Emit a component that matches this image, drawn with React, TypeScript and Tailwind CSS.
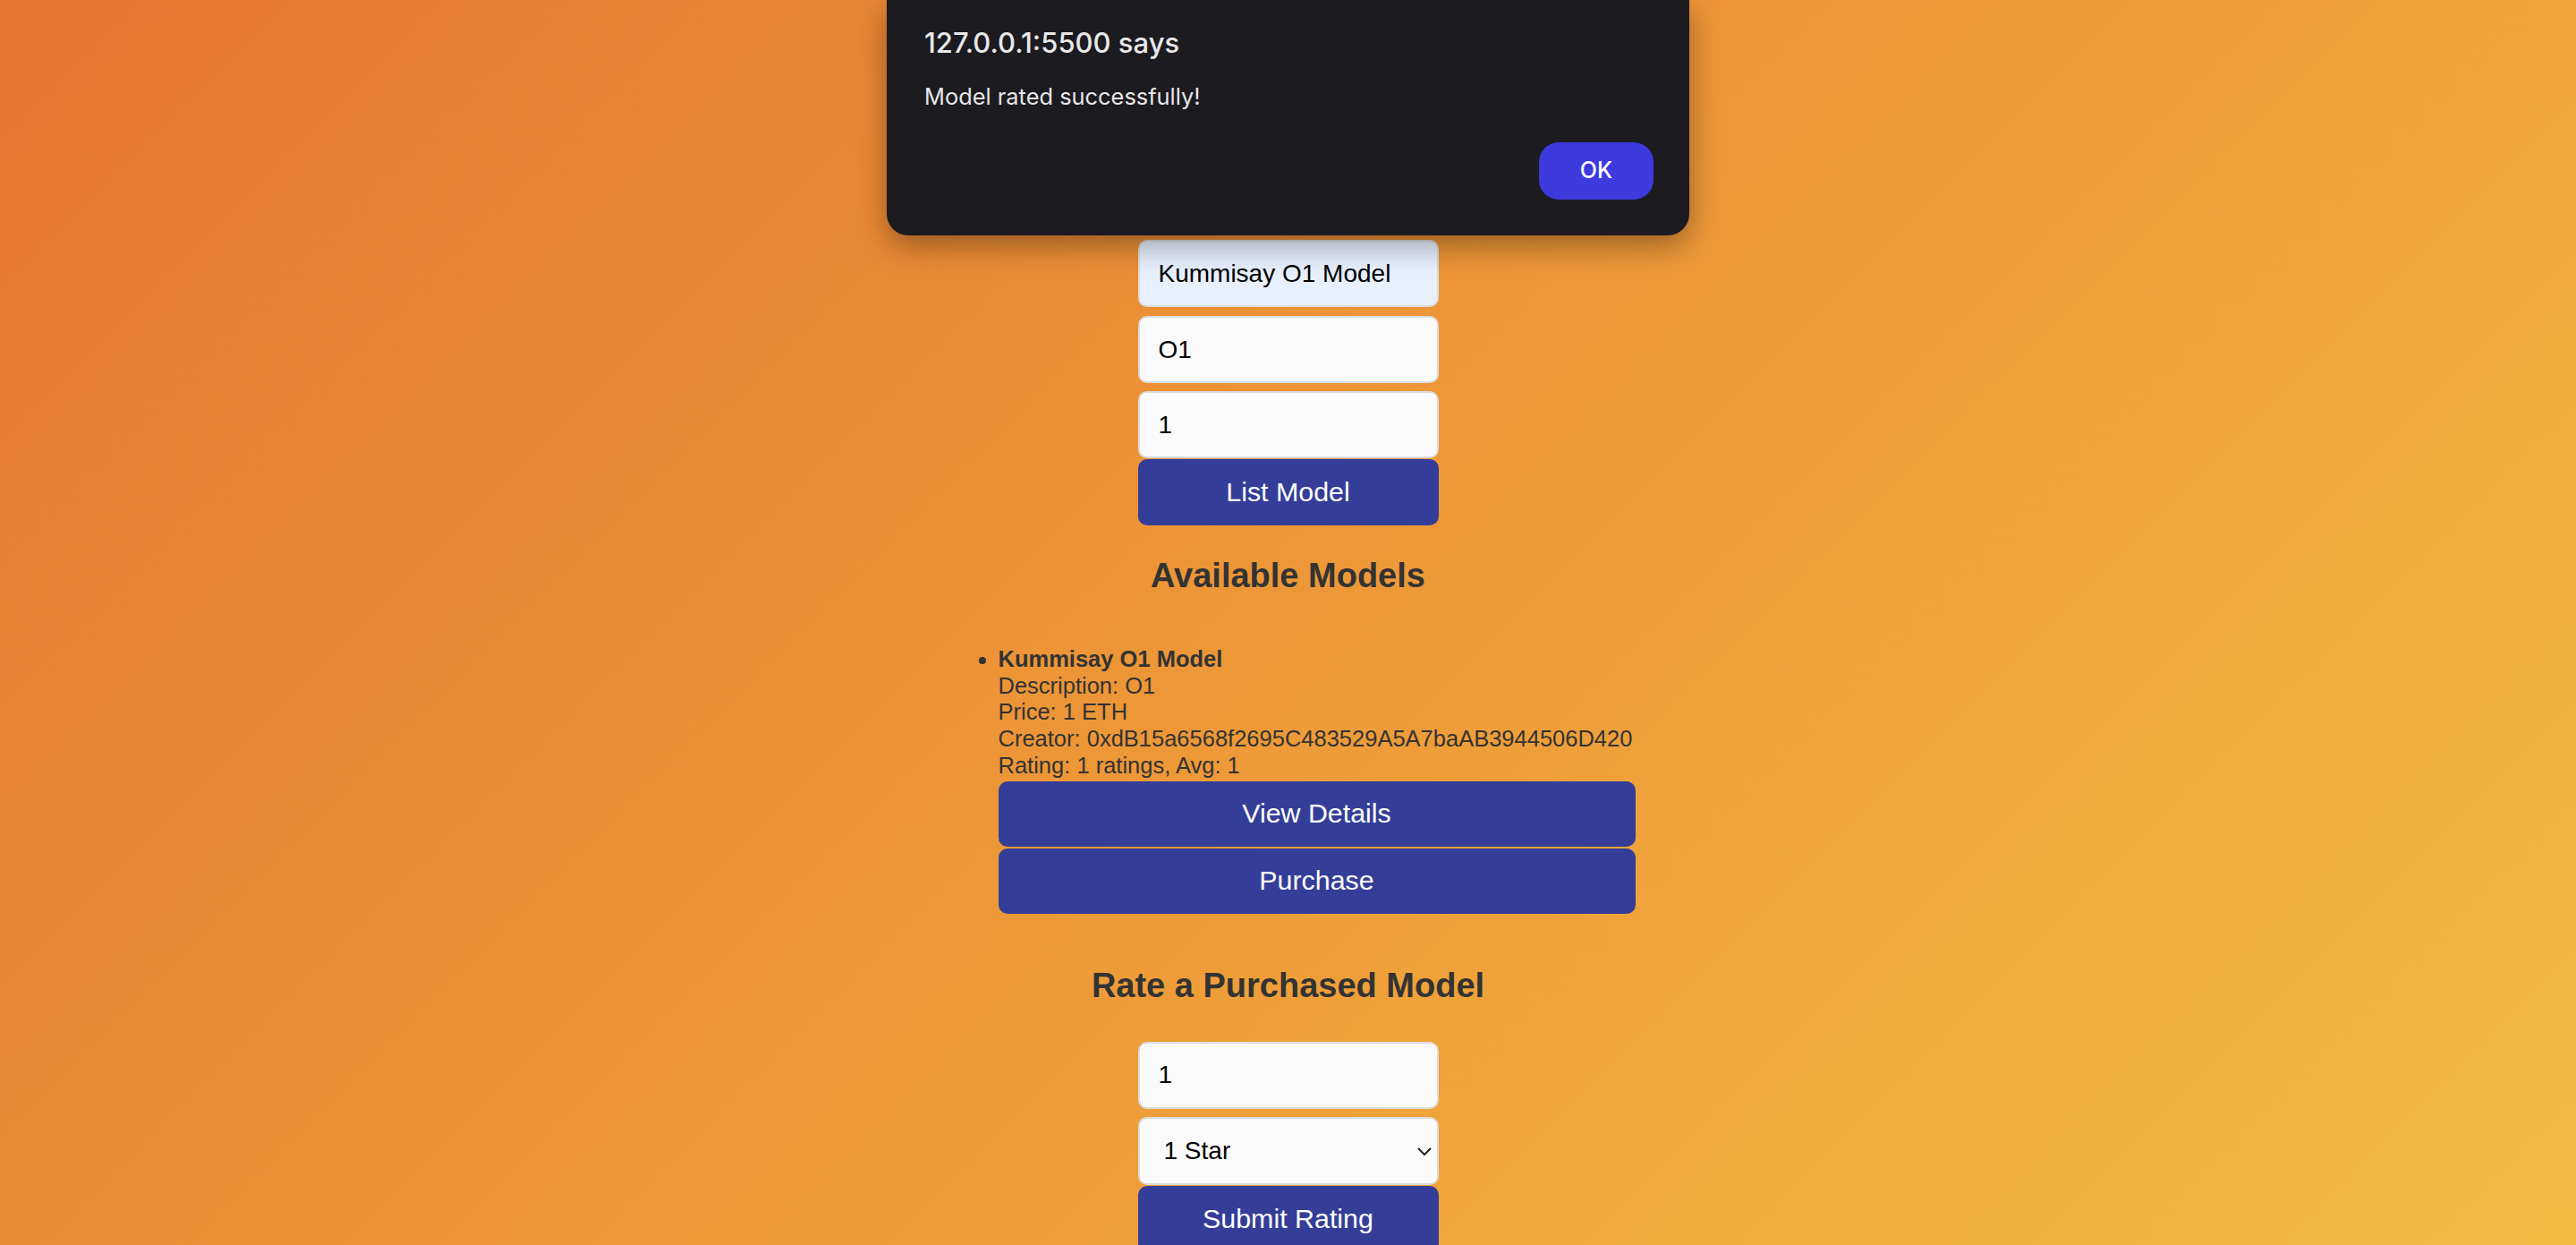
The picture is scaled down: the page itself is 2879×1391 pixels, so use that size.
import { ChangeEvent, useState } from 'react';

const fieldClass =
  'block h-[75px] w-full rounded-[10px] border-2 border-[#dcdcdc] pl-[21px] text-[28px] text-black outline-none';

const primaryButton =
  'block w-full rounded-[10px] bg-[#343e98] text-[30.4px] text-white';

export default function App() {
  const [name, setName] = useState('Kummisay O1 Model');
  const [desc, setDesc] = useState('O1');
  const [price, setPrice] = useState('1');
  const [modelId, setModelId] = useState('1');
  const [stars, setStars] = useState('1');
  const [alertOpen, setAlertOpen] = useState(true);

  const bind = (fn: (v: string) => void) => (e: ChangeEvent<HTMLInputElement>) => fn(e.target.value);

  return (
    <div className="relative h-screen overflow-hidden bg-[linear-gradient(135deg,#e6752e,#f4bb41)] font-['Liberation_Sans',Arial,sans-serif] text-[#333]">
      <main className="flex flex-col items-center pt-[268px]">
        {/* List a model */}
        <form className="flex w-[336px] flex-col" onSubmit={(e) => e.preventDefault()}>
          <input className={`${fieldClass} mb-[10px] bg-[#e8f0fe]`} value={name} onChange={bind(setName)} />
          <input className={`${fieldClass} mb-[9px] h-[74px] bg-[#fafafa]`} value={desc} onChange={bind(setDesc)} />
          <input className={`${fieldClass} mb-px bg-[#fafafa]`} value={price} onChange={bind(setPrice)} />
          <button type="submit" className={`${primaryButton} h-[74px]`}>
            List Model
          </button>
        </form>

        <h2 className="mt-[37px] text-[38px] font-bold leading-[38px]">Available Models</h2>

        <ul className="mt-[60px] list-disc pl-[64px] text-[25.5px] leading-[29.7px]">
          <li className="w-[712px]">
            <strong>{name}</strong>
            <br />
            Description: {desc}
            <br />
            Price: {price} ETH
            <br />
            Creator: 0xdB15a6568f2695C483529A5A7baAB3944506D420
            <br />
            Rating: 1 ratings, Avg: 1
            <button className={`${primaryButton} mt-[2px] h-[73px]`}>View Details</button>
            <button className={`${primaryButton} mt-[2px] h-[73px]`}>Purchase</button>
          </li>
        </ul>

        <h2 className="mt-[61px] text-[38px] font-bold leading-[38px]">Rate a Purchased Model</h2>

        {/* Rate form */}
        <form className="mt-[44px] flex w-[336px] flex-col" onSubmit={(e) => e.preventDefault()}>
          <input className={`${fieldClass} mb-[9px] bg-[#fafafa]`} value={modelId} onChange={bind(setModelId)} />
          <div className="relative">
            <select
              className="block h-[76px] w-full appearance-none rounded-[10px] border-2 border-[#dcdcdc] bg-[#fafafa] pl-[27px] text-[28px] text-black outline-none"
              value={stars}
              onChange={(e) => setStars(e.target.value)}
            >
              <option value="1">1 Star</option>
              <option value="2">2 Stars</option>
              <option value="3">3 Stars</option>
              <option value="4">4 Stars</option>
              <option value="5">5 Stars</option>
            </select>
            <svg
              className="pointer-events-none absolute right-[8px] top-[34px]"
              width="16"
              height="9"
              viewBox="0 0 16 9"
              fill="none"
              stroke="#222"
              strokeWidth="2"
            >
              <polyline points="1,1 8,8 15,1" />
            </svg>
          </div>
          <button type="submit" className={`${primaryButton} mt-px h-[74px]`}>
            Submit Rating
          </button>
        </form>
      </main>

      {/* Browser alert */}
      {alertOpen && (
        <div
          role="alertdialog"
          className="absolute left-[991px] top-0 flex h-[263px] w-[897px] flex-col rounded-b-[24px] bg-[#1c1b20] pl-[42px] pr-[40px] font-['Inter',sans-serif] shadow-[0_12px_34px_rgba(0,0,0,0.35)]"
        >
          <div className="mt-[32px] text-[31px] font-medium leading-[31px] text-[#e8e8ea]">127.0.0.1:5500 says</div>
          <div className="mt-[32px] text-[25.4px] leading-[25px] text-[#e6e6e8]">Model rated successfully!</div>
          <div className="mt-[39px] flex justify-end">
            <button
              className="h-[64px] w-[128px] rounded-[22px] bg-[#3d3ade] text-[25px] font-medium text-white"
              onClick={() => setAlertOpen(false)}
            >
              OK
            </button>
          </div>
        </div>
      )}
    </div>
  );
}
